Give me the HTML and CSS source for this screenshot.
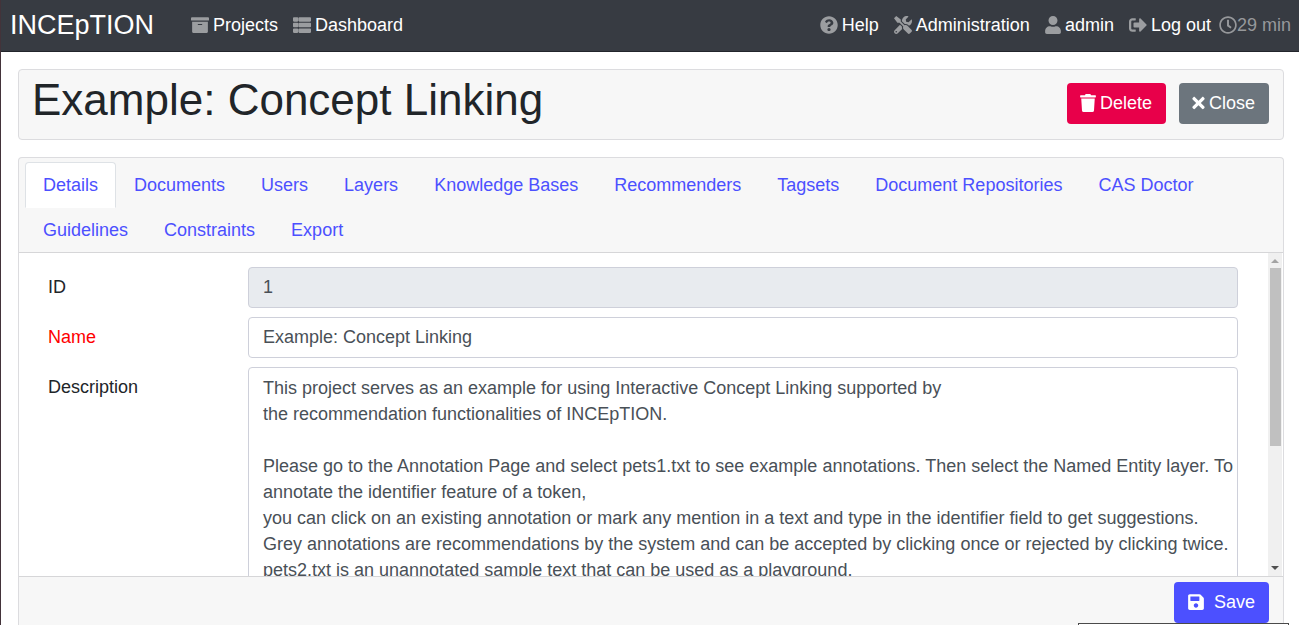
FILE: index.html
```
<!DOCTYPE html>
<html lang="en">
<head>
<meta charset="utf-8">
<title>INCEpTION</title>
<link rel="stylesheet" href="styles.css">
</head>
<body>
<nav class="navbar">
  <a class="brand" href="#">INCEpTION</a>
  <div class="nav-group nav-left">
    <a class="nav-link" href="#"><svg class="icon" viewBox="0 0 512 512"><path d="M32 448c0 17.700 14.300 32 32 32h384c17.700 0 32-14.300 32-32V160H32v288zm160-212c0-6.600 5.400-12 12-12h104c6.600 0 12 5.400 12 12v8c0 6.600-5.400 12-12 12H204c-6.600 0-12-5.400-12-12v-8zM480 32H32C14.300 32 0 46.300 0 64v48c0 8.800 7.200 16 16 16h480c8.800 0 16-7.200 16-16V64c0-17.700-14.300-32-32-32z"/></svg>Projects</a>
    <a class="nav-link" href="#"><svg class="icon" viewBox="0 0 512 512"><path d="M149 216v80c0 13-10 24-24 24H24c-13 0-24-11-24-24v-80c0-13 11-24 24-24h101c14 0 24 11 24 24zM0 376v80c0 13 11 24 24 24h101c14 0 24-11 24-24v-80c0-13-10-24-24-24H24c-13 0-24 11-24 24zM125 32H24C11 32 0 43 0 56v80c0 13 11 24 24 24h101c14 0 24-11 24-24V56c0-13-10-24-24-24zm56 448h307c13 0 24-11 24-24v-80c0-13-11-24-24-24H181c-13 0-24 11-24 24v80c0 13 11 24 24 24zM157 56v80c0 13 11 24 24 24h307c13 0 24-11 24-24V56c0-13-11-24-24-24H181c-13 0-24 11-24 24zm24 264h307c13 0 24-11 24-24v-80c0-13-11-24-24-24H181c-13 0-24 11-24 24v80c0 13 11 24 24 24z"/></svg>Dashboard</a>
  </div>
  <div class="nav-group nav-right">
    <a class="nav-link" href="#"><svg class="icon" viewBox="0 0 512 512"><path d="M504 256c0 137-111 248-248 248S8 393 8 256C8 119.100 119 8 256 8s248 111.100 248 248zM262.700 90c-54.500 0-89.300 23-116.500 63.800-3.500 5.300-2.400 12.400 2.700 16.300l34.700 26.300c5.200 3.900 12.600 3 16.700-2.100 17.900-22.700 30.100-35.800 57.300-35.800 20.400 0 45.700 13.100 45.700 33 0 15-12.400 22.700-32.500 34C247.100 238.500 216 255 216 296v4c0 6.600 5.400 12 12 12h56c6.600 0 12-5.400 12-12v-1.300c0-28.700 83.800-29.800 83.800-107.500C379.800 132.800 319.200 90 262.700 90zM256 338c-25.400 0-46 20.600-46 46s20.600 46 46 46 46-20.600 46-46-20.600-46-46-46z"/></svg>Help</a>
    <a class="nav-link" href="#"><svg class="icon" viewBox="0 0 512 512"><path d="M501.100 395.700 384 278.600c-23.100-23.100-57.600-27.600-85.400-13.900L192 158.100V96L64 0 0 64l96 128h62.100l106.600 106.600c-13.600 27.800-9.200 62.300 13.900 85.400l117.100 117.100c14.600 14.600 38.200 14.600 52.700 0l52.700-52.700c14.500-14.600 14.500-38.200 0-52.700zM331.700 225c28.300 0 54.900 11 74.900 31l19.400 19.400c15.800-6.900 30.800-16.500 43.800-29.500 37.100-37.100 49.700-89.300 37.900-136.700-2.200-9-13.500-12.100-20.100-5.500l-74.400 74.400-67.900-11.300L334 98.900l74.400-74.400c6.600-6.600 3.400-17.900-5.700-20.200-47.400-11.700-99.600.9-136.600 37.900-28.500 28.500-41.900 66.100-41.200 103.600l82.100 82.100c8.100-1.900 16.500-2.900 24.700-2.900zm-103.900 82-56.700-56.700L18.700 402.800c-25 25-25 65.500 0 90.500s65.500 25 90.500 0l123.600-123.600c-7.600-19.900-9.900-41.600-5-62.700zM64 472c-13.200 0-24-10.800-24-24 0-13.300 10.700-24 24-24s24 10.700 24 24c0 13.200-10.700 24-24 24z"/></svg>Administration</a>
    <a class="nav-link" href="#"><svg class="icon icon-narrow" viewBox="0 0 448 512"><path d="M224 256c70.700 0 128-57.300 128-128S294.700 0 224 0 96 57.300 96 128s57.300 128 128 128zm89.600 32h-16.700c-22.200 10.200-46.900 16-72.900 16s-50.600-5.800-72.900-16h-16.700C60.200 288 0 348.200 0 422.400V464c0 26.500 21.500 48 48 48h352c26.500 0 48-21.500 48-48v-41.600c0-74.200-60.200-134.400-134.400-134.400z"/></svg>admin</a>
    <a class="nav-link logout" href="#"><svg class="icon" viewBox="0 0 512 512"><path d="m497 273-168 168c-15 15-41 4.500-41-17v-96H152c-13.300 0-24-10.700-24-24v-96c0-13.300 10.700-24 24-24h136V88c0-21.400 25.900-32 41-17l168 168c9.300 9.400 9.300 24.600 0 34zM192 436v-40c0-6.600-5.400-12-12-12H96c-17.700 0-32-14.300-32-32V160c0-17.700 14.300-32 32-32h84c6.600 0 12-5.400 12-12V76c0-6.600-5.400-12-12-12H96c-53 0-96 43-96 96v192c0 53 43 96 96 96h84c6.600 0 12-5.400 12-12z"/></svg>Log out</a>
    <span class="timer"><svg class="icon" viewBox="0 0 512 512"><path d="M256 8C119 8 8 119 8 256s111 248 248 248 248-111 248-248S393 8 256 8zm0 448c-110.500 0-200-89.500-200-200S145.500 56 256 56s200 89.500 200 200-89.500 200-200 200zm61.800-104.400-84.900-61.700c-3.100-2.300-4.900-5.900-4.900-9.700V116c0-6.600 5.400-12 12-12h32c6.600 0 12 5.400 12 12v141.700l66.800 48.600c5.400 3.900 6.500 11.400 2.600 16.800L334.600 349c-3.900 5.300-11.400 6.500-16.800 2.600z"/></svg>29 min</span>
  </div>
</nav>
<main class="page">
  <header class="card title-card">
    <h1 class="title">Example: Concept Linking</h1>
    <div class="actions">
      <button class="btn btn-danger" type="button"><svg class="icon icon-narrow" viewBox="0 0 448 512"><path d="M432 32H312l-9.400-18.700A24 24 0 0 0 281.100 0H166.800a24 24 0 0 0-21.400 13.300L136 32H16A16 16 0 0 0 0 48v32a16 16 0 0 0 16 16h416a16 16 0 0 0 16-16V48a16 16 0 0 0-16-16zM53.200 467a48 48 0 0 0 47.900 45h245.800a48 48 0 0 0 47.900-45L416 128H32z"/></svg>Delete</button>
      <button class="btn btn-secondary" type="button"><svg class="icon icon-times" viewBox="0 0 352 512"><path d="m242.700 256 100.100-100.100c12.300-12.300 12.300-32.200 0-44.500l-22.200-22.200c-12.300-12.300-32.200-12.300-44.500 0L176 189.300 75.900 89.200c-12.300-12.300-32.200-12.300-44.500 0L9.200 111.500c-12.300 12.300-12.300 32.200 0 44.500L109.300 256 9.200 356.100c-12.300 12.300-12.300 32.200 0 44.500l22.200 22.200c12.300 12.300 32.200 12.300 44.500 0L176 322.700l100.100 100.100c12.300 12.300 32.200 12.300 44.500 0l22.200-22.200c12.300-12.300 12.300-32.200 0-44.500z"/></svg>Close</button>
    </div>
  </header>
  <section class="card project">
    <div class="tabs">
      <a class="tab active" href="#">Details</a>
      <a class="tab" href="#">Documents</a>
      <a class="tab" href="#">Users</a>
      <a class="tab" href="#">Layers</a>
      <a class="tab" href="#">Knowledge Bases</a>
      <a class="tab" href="#">Recommenders</a>
      <a class="tab" href="#">Tagsets</a>
      <a class="tab" href="#">Document Repositories</a>
      <a class="tab" href="#">CAS Doctor</a>
      <a class="tab" href="#">Guidelines</a>
      <a class="tab" href="#">Constraints</a>
      <a class="tab" href="#">Export</a>
    </div>
    <div class="panel">
      <form class="form">
        <label for="pid">ID</label>
        <input class="field" id="pid" type="text" value="1" disabled>
        <label class="required" for="pname">Name</label>
        <input class="field" id="pname" type="text" value="Example: Concept Linking">
        <label for="pdesc">Description</label>
        <textarea class="field field-area" id="pdesc" rows="14">This project serves as an example for using Interactive Concept Linking supported by
the recommendation functionalities of INCEpTION.

Please go to the Annotation Page and select pets1.txt to see example annotations. Then select the Named Entity layer. To annotate the identifier feature of a token,
you can click on an existing annotation or mark any mention in a text and type in the identifier field to get suggestions.
Grey annotations are recommendations by the system and can be accepted by clicking once or rejected by clicking twice.
pets2.txt is an unannotated sample text that can be used as a playground.</textarea>
      </form>
      <div class="scrollbar">
        <svg class="arrow arrow-up" viewBox="0 0 8 4"><path d="M0 4 4 0l4 4z"/></svg>
        <div class="thumb"></div>
        <svg class="arrow" viewBox="0 0 8 4"><path d="M0 0h8L4 4z"/></svg>
      </div>
    </div>
    <footer class="panel-footer">
      <button class="btn btn-primary" type="button"><svg class="icon icon-save" viewBox="0 0 448 512"><path d="m433.900 129.900-83.900-83.900A48 48 0 0 0 316.100 32H48C21.500 32 0 53.500 0 80v352c0 26.500 21.500 48 48 48h352c26.500 0 48-21.500 48-48V163.900a48 48 0 0 0-14.100-34zM224 416c-35.300 0-64-28.700-64-64s28.700-64 64-64 64 28.700 64 64-28.700 64-64 64zm96-304.500V212c0 6.600-5.400 12-12 12H76c-6.600 0-12-5.400-12-12V108c0-6.600 5.400-12 12-12h228.500c3.200 0 6.200 1.300 8.500 3.500l3.500 3.500a12 12 0 0 1 3.500 8.500z"/></svg>Save</button>
    </footer>
  </section>
</main>
<div class="status-box"></div>
</body>
</html>
```
FILE: styles.css
```
* { box-sizing: border-box; }

body {
  margin: 0;
  height: 100vh;
  display: flex;
  flex-direction: column;
  overflow: hidden;
  position: relative;
  border-left: 1px solid #43333a;
  background: #fff;
  color: #212529;
  font: 18px/26px "Liberation Sans", Arial, sans-serif;
}

a { text-decoration: none; }

.icon {
  width: 18px;
  height: 18px;
  margin-right: 4px;
  flex: none;
  fill: currentColor;
}
.icon-narrow { width: 16px; }
.icon-times { width: 13px; }
.icon-save { margin-right: 9px; }

.navbar {
  display: flex;
  align-items: center;
  flex: none;
  height: 52px;
  padding: 0 8px 2px 9px;
  background: #373b42;
  border-bottom: 1px solid #22252b;
}
.brand { color: #fff; font-size: 27px; line-height: 32px; }
.nav-group { display: flex; gap: 15px; }
.nav-left { margin-left: 37px; }
.nav-right { margin-left: auto; }
.nav-link, .timer { display: flex; align-items: center; white-space: nowrap; }
.nav-link { color: #fff; }
.nav-link .icon { color: #9b9da0; }
.logout { margin-right: -7px; }
.timer { color: #96989b; }
.timer .icon { margin-right: 0; }

.page {
  flex: 1;
  min-height: 0;
  display: flex;
  flex-direction: column;
  gap: 17px;
  padding: 17px 15px 0 17px;
}
.card {
  border: 1px solid #dcdcdf;
  border-radius: 4px;
  background: #f7f7f7;
}
.title-card {
  display: flex;
  justify-content: space-between;
  align-items: flex-start;
  min-height: 71px;
  padding: 4px 14px 9px 13px;
}
.title { margin: 0; font-size: 44px; line-height: 52px; font-weight: 400; }
.actions { display: flex; gap: 13px; padding-top: 9px; }
.btn {
  display: flex;
  align-items: center;
  height: 41px;
  padding: 0 14px 2px 13px;
  border: 0;
  border-radius: 4px;
  color: #fff;
  font: inherit;
}
.btn-danger { background: #e8004a; }
.btn-secondary { background: #6c757d; }
.btn-primary { background: #4c50ff; }

.project { flex: 1; min-height: 0; display: flex; flex-direction: column; border-bottom: 0; border-radius: 4px 4px 0 0; }
.tabs {
  display: flex;
  flex-wrap: wrap;
  padding: 4px 6px 0;
  border-bottom: 1px solid #d6d6d8;
}
.tab {
  margin-bottom: -1px;
  padding: 9px 17px;
  border: 1px solid transparent;
  border-radius: 4px 4px 0 0;
  color: #4c50ff;
}
.tab.active { background: #fff; border-color: #dee2e6 #dee2e6 #fff; }

.panel { flex: 1; min-height: 0; display: flex; overflow: hidden; background: #fff; }
.form {
  flex: 1;
  display: grid;
  grid-template-columns: 200px 1fr;
  grid-auto-rows: max-content;
  row-gap: 9px;
  padding: 14px 30px 0 29px;
}
.form label { padding-top: 7px; }
.form .required { color: #f00; }
.field {
  width: 100%;
  min-width: 0;
  margin: 0;
  padding: 6px 14px 7px;
  border: 1px solid #ced0da;
  border-radius: 4px;
  background: #fff;
  color: #495057;
  font: inherit;
  resize: none;
  overflow: hidden;
}
.field-area { padding: 7px 2px 7px 14px; }
.field:disabled { background: #e8ebef; }
.scrollbar {
  flex: none;
  width: 14px;
  margin-right: 1px;
  padding: 6px 0;
  display: flex;
  flex-direction: column;
  align-items: center;
  background: #f0f0f0;
}
.thumb { width: 11px; height: 178px; margin: 5px 0 auto; background: #c0c0c0; }
.arrow { width: 8px; height: 4px; fill: #505050; }
.arrow-up { fill: #a3a3a3; }

.panel-footer {
  flex: none;
  display: flex;
  justify-content: flex-end;
  padding: 5px 14px 2px;
  border-top: 1px solid #d6d6d8;
}
.status-box {
  position: absolute;
  right: 10px;
  bottom: 0;
  width: 211px;
  height: 2px;
  border: 1px solid #4a4a4a;
  border-bottom: 0;
  background: #fff;
}
```
